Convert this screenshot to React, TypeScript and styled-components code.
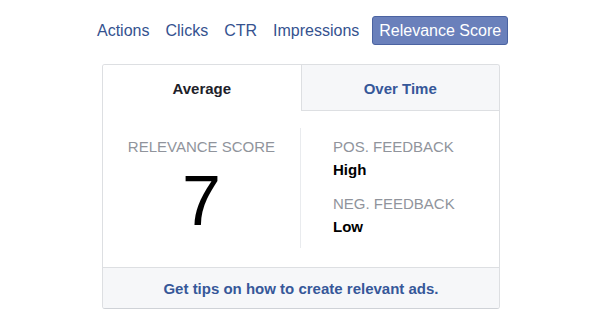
import React, { useState } from "react";
import styled, { createGlobalStyle } from "styled-components";

const Global = createGlobalStyle`
  html, body { margin: 0; padding: 0; background: #ffffff; }
  body { font-family: "Liberation Sans", Arial, Helvetica, sans-serif; }
`;

const Page = styled.div`
  width: 606px;
  height: 333px;
  padding: 16px 0 0 89px;
  box-sizing: border-box;
  display: flex;
  flex-direction: column;
  align-items: flex-start;
`;

const Nav = styled.nav`
  display: flex;
  align-items: center;
  height: 29px;
`;

const NavItem = styled.a<{ $active?: boolean }>`
  display: flex;
  align-items: center;
  height: 29px;
  box-sizing: border-box;
  padding: 0 ${(p) => (p.$active ? "6px" : "8px")};
  margin-left: ${(p) => (p.$active ? "5px" : "0")};
  font-size: 16px;
  color: ${(p) => (p.$active ? "#ffffff" : "#35528f")};
  background: ${(p) => (p.$active ? "#6a80bb" : "transparent")};
  border: ${(p) => (p.$active ? "1px solid #4b63a1" : "none")};
  border-radius: 3px;
  text-decoration: none;
  cursor: pointer;
  white-space: nowrap;
`;

const Card = styled.section`
  margin: 19px 0 0 13px;
  width: 398px;
  box-sizing: border-box;
  border: 1px solid #dddfe2;
  border-bottom-color: #cfd2d7;
  border-radius: 3px;
  background: #ffffff;
  overflow: hidden;
`;

const Tabs = styled.div`
  display: flex;
  height: 46px;
`;

const Tab = styled.button<{ $active?: boolean }>`
  flex: 1;
  box-sizing: border-box;
  margin: 0;
  padding: 2px 0 0;
  font-family: inherit;
  font-size: 15px;
  font-weight: bold;
  color: ${(p) => (p.$active ? "#1d2129" : "#365899")};
  background: ${(p) => (p.$active ? "#ffffff" : "#f6f7f9")};
  border: none;
  border-bottom: 1px solid ${(p) => (p.$active ? "transparent" : "#dddfe2")};
  cursor: pointer;
  & + & {
    border-left: 1px solid #dddfe2;
  }
`;

const Body = styled.div`
  display: flex;
  padding: 17px 0 19px;
  height: 156px;
  box-sizing: border-box;
`;

const ScoreColumn = styled.div`
  width: 197px;
  border-right: 1px solid #e9ebee;
  display: flex;
  flex-direction: column;
  align-items: center;
  padding-top: 10px;
`;

const FeedbackColumn = styled.div`
  flex: 1;
  padding: 10px 0 0 32px;
  display: flex;
  flex-direction: column;
`;

const Label = styled.div`
  font-size: 15px;
  line-height: 18px;
  color: #90949c;
  text-transform: uppercase;
  white-space: nowrap;
`;

const Score = styled.div`
  font-size: 70px;
  line-height: 70px;
  margin-top: 10px;
  color: #000000;
`;

const Value = styled.div<{ $last?: boolean }>`
  font-size: 15px;
  line-height: 18px;
  font-weight: bold;
  color: #000000;
  margin-top: 5px;
  margin-bottom: ${(p) => (p.$last ? "0" : "16px")};
`;

const Footer = styled.a`
  display: flex;
  align-items: center;
  justify-content: center;
  height: 41px;
  box-sizing: border-box;
  border-top: 1px solid #dddfe2;
  background: #f6f7f9;
  font-size: 15px;
  font-weight: bold;
  color: #365899;
  text-decoration: none;
  cursor: pointer;
`;

const metrics = ["Actions", "Clicks", "CTR", "Impressions", "Relevance Score"];

export default function App() {
  const [metric, setMetric] = useState("Relevance Score");
  const [tab, setTab] = useState("Average");
  return (
    <>
      <Global />
      <Page>
        <Nav>
          {metrics.map((m) => (
            <NavItem key={m} $active={m === metric} onClick={() => setMetric(m)}>
              {m}
            </NavItem>
          ))}
        </Nav>
        <Card>
          <Tabs>
            {["Average", "Over Time"].map((t) => (
              <Tab key={t} $active={t === tab} onClick={() => setTab(t)}>
                {t}
              </Tab>
            ))}
          </Tabs>
          <Body>
            <ScoreColumn>
              <Label>Relevance Score</Label>
              <Score>7</Score>
            </ScoreColumn>
            <FeedbackColumn>
              <Label>Pos. Feedback</Label>
              <Value>High</Value>
              <Label>Neg. Feedback</Label>
              <Value $last>Low</Value>
            </FeedbackColumn>
          </Body>
          <Footer>Get tips on how to create relevant ads.</Footer>
        </Card>
      </Page>
    </>
  );
}
